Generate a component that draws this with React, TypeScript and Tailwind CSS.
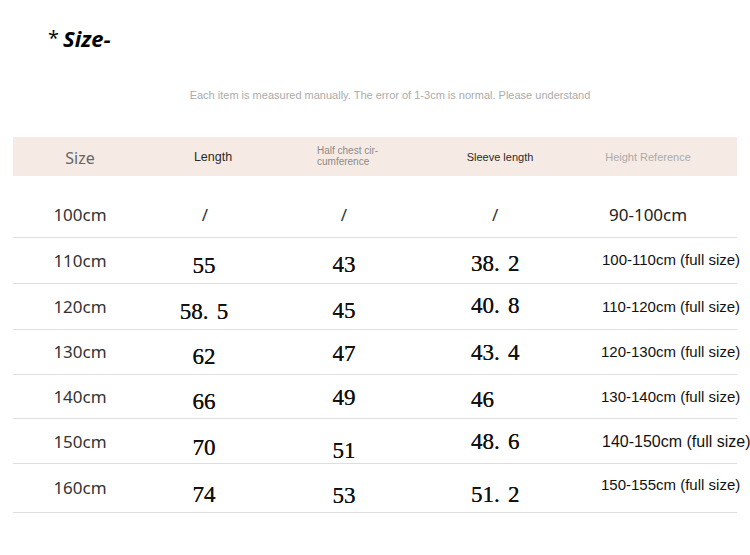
import React from "react";

type Row = {
  size: string;
  len: string;
  chest: string;
  sleeve: string;
  ref: string;
  h: string;
  lenPad: string;
  chestPad: string;
  sleevePad: string;
  refCls: string;
};

const rows: Row[] = [
  { size: "110cm", len: "55", chest: "43", sleeve: "38.2", ref: "100-110cm (full size)", h: "h-[46px]", lenPad: "pt-[10px]", chestPad: "pt-[8px]", sleevePad: "pt-[6px]", refCls: "pl-[31px] text-[15px] pb-[2px]" },
  { size: "120cm", len: "58.5", chest: "45", sleeve: "40.8", ref: "110-120cm (full size)", h: "h-[46px]", lenPad: "pt-[10px]", chestPad: "pt-[8px]", sleevePad: "pb-[2px]", refCls: "pl-[31px] text-[15px]" },
  { size: "130cm", len: "62", chest: "47", sleeve: "43.4", ref: "120-130cm (full size)", h: "h-[45px]", lenPad: "pt-[10px]", chestPad: "pt-[4px]", sleevePad: "pt-[2px]", refCls: "pl-[30px] text-[15px]" },
  { size: "140cm", len: "66", chest: "49", sleeve: "46", ref: "130-140cm (full size)", h: "h-[44px]", lenPad: "pt-[10px]", chestPad: "pt-[2px]", sleevePad: "pt-[6px] pl-[2px]", refCls: "pl-[30px] text-[15px]" },
  { size: "150cm", len: "70", chest: "51", sleeve: "48.6", ref: "140-150cm (full size)", h: "h-[45px]", lenPad: "pt-[12px]", chestPad: "pt-[18px]", sleevePad: "pt-[0px]", refCls: "pl-[31px] text-[16px]" },
  { size: "160cm", len: "74", chest: "53", sleeve: "51.2", ref: "150-155cm (full size)", h: "h-[49px]", lenPad: "pt-[14px]", chestPad: "pt-[16px]", sleevePad: "pt-[14px] pl-[2px]", refCls: "pl-[30px] text-[15px] pb-[6px]" },
];

function Num({ v }: { v: string }) {
  const parts = v.split(".");
  return (
    <span className="font-['Liberation_Serif',serif] text-[23px] leading-[28px] text-[#111] whitespace-nowrap [text-shadow:0_0_0.4px_#111]">
      {parts[0]}
      {parts.length > 1 && (
        <>
          <span className="inline-block w-[14px] text-left">.</span>
          {parts[1]}
        </>
      )}
    </span>
  );
}

const gridCols = "grid grid-cols-[134px_120px_154px_150px_166px]";

export default function App() {
  return (
    <div className="w-[750px] h-[555px] bg-white overflow-hidden font-['Liberation_Sans',Arial,sans-serif]">
      {/* Title */}
      <div className="pt-[24px] pl-[48px] h-[54px] flex items-start">
        <span className="font-['Open_Sans',sans-serif] text-[20px] leading-[28px] text-black">*</span>
        <span className="ml-[4px] font-['Open_Sans',sans-serif] font-bold italic text-[22px] leading-[28px] text-black">
          Size-
        </span>
      </div>

      {/* Subtitle */}
      <div className="mt-[33px] h-[16px] text-center text-[11px] leading-[16px] text-[#ababab]">
        <span className="ml-[30px]">Each item is measured manually. The error of 1-3cm is normal. Please understand</span>
      </div>

      {/* Table */}
      <div className="mt-[34px] ml-[13px] w-[724px]">
        {/* Header */}
        <div className={`${gridCols} h-[39px] bg-[#f6ebe4] items-center`}>
          <div className="text-center font-['Noto_Sans',sans-serif] text-[16px] text-[#666] pt-[2px]">Size</div>
          <div className="text-center pl-[12px] text-[12.5px] text-[#2a2a2a] pt-[1px]">Length</div>
          <div className="pl-[50px] text-[10px] leading-[11px] text-[#8a8a8a] pb-[2px]">
            Half chest cir-
            <br />
            cumference
          </div>
          <div className="text-center pl-[8px] text-[11px] text-[#2a2a2a] pt-[1px]">Sleeve length</div>
          <div className="text-center pr-[12px] text-[11px] text-[#aaaaaa] pt-[1px]">Height Reference</div>
        </div>

        {/* First row */}
        <div className={`${gridCols} mt-[17px] h-[45px] items-center border-b border-[#dedede]`}>
          <div className="text-center font-['Noto_Sans',sans-serif] text-[17px] text-[#333]">100cm</div>
          <div className="text-center pr-[4px] font-['Noto_Sans',sans-serif] text-[17px] text-[#333]">/</div>
          <div className="text-center font-['Noto_Sans',sans-serif] text-[17px] text-[#333]">/</div>
          <div className="pl-[71px] font-['Noto_Sans',sans-serif] text-[17px] text-[#333]">/</div>
          <div className="pl-[38px] font-['Noto_Sans',sans-serif] text-[17px] text-[#222]">90-100cm</div>
        </div>

        {rows.map((r) => (
          <div key={r.size} className={`${gridCols} ${r.h} items-center border-b border-[#dedede]`}>
            <div className="text-center font-['Noto_Sans',sans-serif] text-[17px] leading-[24px] text-[#333]">{r.size}</div>
            <div className={`text-center pr-[6px] ${r.lenPad}`}>
              <Num v={r.len} />
            </div>
            <div className={`text-center ${r.chestPad}`}>
              <Num v={r.chest} />
            </div>
            <div className={`pl-[50px] ${r.sleevePad}`}>
              <Num v={r.sleeve} />
            </div>
            <div className={`${r.refCls} leading-[20px] text-[#111] whitespace-nowrap`}>{r.ref}</div>
          </div>
        ))}
      </div>
    </div>
  );
}
